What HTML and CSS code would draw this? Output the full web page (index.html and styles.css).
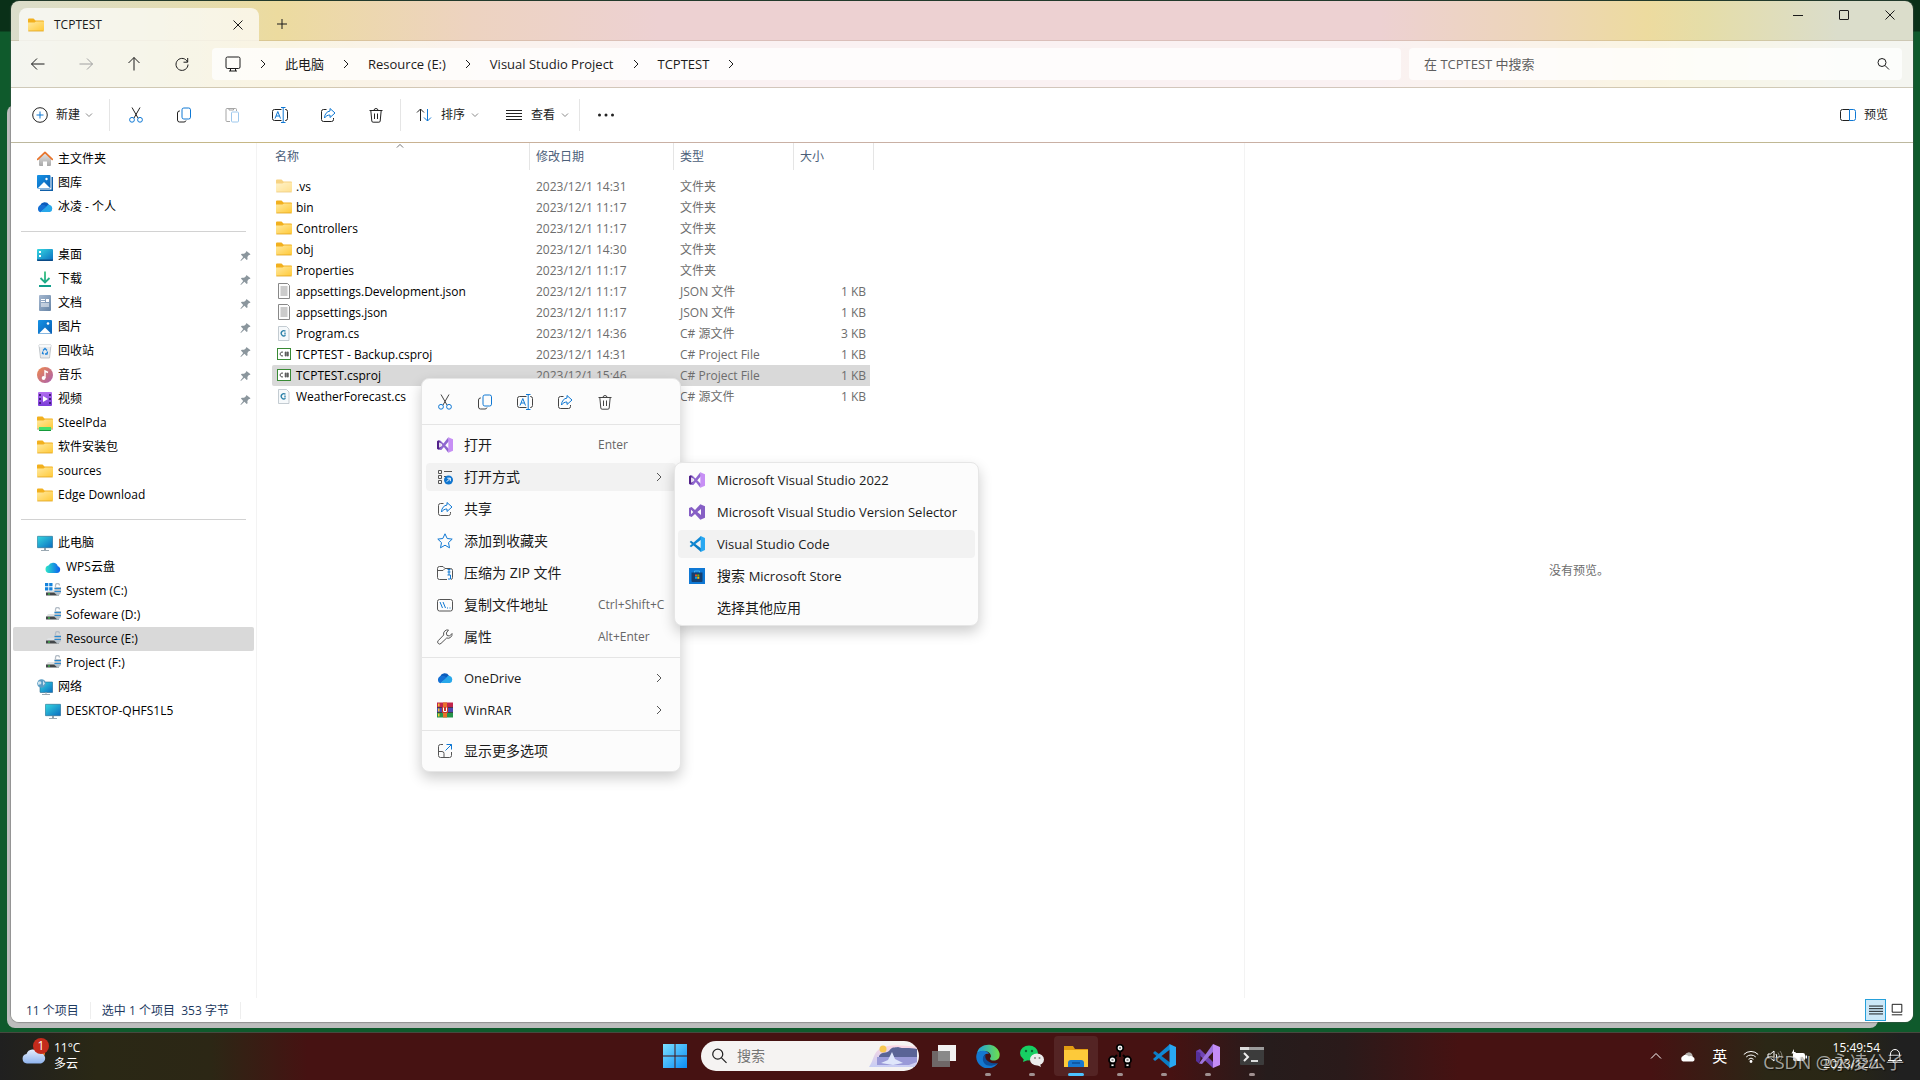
FILE: index.html
```html
<!DOCTYPE html>
<html lang="zh-CN">
<head>
    <meta charset="UTF-8">
    <meta name="viewport" content="width=device-width, initial-scale=1.0">
    <title>TCPTEST</title>
    <link rel="stylesheet" href="styles.css">
</head>
<body>
    <!-- Icon sprite -->
    <svg class="sprite" width="0" height="0" aria-hidden="true">
        <defs>
            <linearGradient id="gFolder" x1="0" y1="0" x2="1" y2="1"><stop offset="0" stop-color="#ffe9a0"/><stop offset="1" stop-color="#ffc937"/></linearGradient>
            <linearGradient id="gScreen" x1="0" y1="0" x2="1" y2="1"><stop offset="0" stop-color="#35d8e0"/><stop offset="1" stop-color="#0b6cc0"/></linearGradient>
            <linearGradient id="gPhoto" x1="0" y1="0" x2="1" y2="1"><stop offset="0" stop-color="#1593e6"/><stop offset="1" stop-color="#0a5fb4"/></linearGradient>
            <linearGradient id="gMusic" x1="0" y1="0" x2="1" y2="1"><stop offset="0" stop-color="#f08a4b"/><stop offset="1" stop-color="#a95fb0"/></linearGradient>
            <linearGradient id="gDown" gradientUnits="userSpaceOnUse" x1="0" y1="0" x2="0" y2="16"><stop offset="0" stop-color="#3cc47c"/><stop offset="1" stop-color="#0d9c8c"/></linearGradient>
            <linearGradient id="gVideo" x1="0" y1="0" x2="0" y2="1"><stop offset="0" stop-color="#b36ef0"/><stop offset="1" stop-color="#7a3bd8"/></linearGradient>
            <linearGradient id="gDoc" x1="0" y1="0" x2="1" y2="1"><stop offset="0" stop-color="#a5b8d0"/><stop offset="1" stop-color="#6684a6"/></linearGradient>
            <linearGradient id="gWps" x1="0" y1="0" x2="1" y2="0"><stop offset="0" stop-color="#2ee6c8"/><stop offset="1" stop-color="#0a5df0"/></linearGradient>
            <linearGradient id="gHome" x1="0" y1="0" x2="0" y2="1"><stop offset="0" stop-color="#e4e4e4"/><stop offset="1" stop-color="#a8a8a8"/></linearGradient>
            <linearGradient id="gWin" x1="0" y1="0" x2="1" y2="1"><stop offset="0" stop-color="#7be0ff"/><stop offset="1" stop-color="#0a8cf5"/></linearGradient>
            <linearGradient id="gEdge" x1="0" y1="0" x2="1" y2="0"><stop offset="0" stop-color="#1b9de2"/><stop offset="1" stop-color="#6fe04a"/></linearGradient>
            <linearGradient id="gCloud" x1="0" y1="0" x2="0" y2="1"><stop offset="0" stop-color="#e4eefc"/><stop offset="1" stop-color="#8fb4ee"/></linearGradient>
            <linearGradient id="gSky" x1="0" y1="0" x2="0" y2="1"><stop offset="0" stop-color="#fbd6e2"/><stop offset="1" stop-color="#c7cdf4"/></linearGradient>
        </defs>

        <symbol id="folder" viewBox="0 0 16 16"><path d="M0 2.500a1 1 0 0 1 1-1h4.500l2 2H15a1 1 0 0 1 1 1V6H0z" fill="#f2b01e"/><path d="M0 5.500h6.500l1.500-1h8V13a1 1 0 0 1-1 1H1a1 1 0 0 1-1-1z" fill="url(#gFolder)"/><path d="M.3 14h15.400" stroke="#e0a21c" stroke-width=".8"/></symbol>
        <symbol id="folder-green" viewBox="0 0 16 16"><use href="#folder"/><path d="M0 14h16" stroke="#b8bcc0" stroke-width="1"/><path d="M2 12h12v3H2z" fill="#45e06a"/><path d="M2 15h12v1H2z" fill="#159a3a"/></symbol>
        <symbol id="home" viewBox="0 0 16 16"><path d="M2 7.500 8 2l6 5.500V14a1 1 0 0 1-1 1h-3v-4.500H6V15H3a1 1 0 0 1-1-1z" fill="url(#gHome)"/><path d="M.7 8.300 8 1.300l7.300 7" fill="none" stroke="#e8742c" stroke-width="1.700" stroke-linecap="round" stroke-linejoin="round"/></symbol>
        <symbol id="gallery" viewBox="0 0 16 16"><path d="M3 2h13v14H3z" fill="#0f5fa8"/><path d="M0 0h14.500v14.500H0z" fill="#fff"/><rect width="13.500" height="13.500" rx="1" fill="url(#gPhoto)"/><path d="m1 13 6-6 6 6z" fill="#fff"/><circle cx="9.500" cy="4" r="1.200" fill="#fff"/></symbol>
        <symbol id="picture" viewBox="0 0 16 16"><rect x="1" y="1" width="14" height="14" rx="1" fill="url(#gPhoto)"/><path d="m2 14.500 6-6 6 6z" fill="#fff"/><circle cx="11" cy="4.500" r="1.300" fill="#fff"/></symbol>
        <symbol id="onedrive" viewBox="0 0 16 16"><path d="M3 6.500a5 5 0 0 1 9-.8l-3 4-6 1z" fill="#0a5cbc"/><path d="M4 6a3.800 3.800 0 0 0-.5 7.300L10 8.500A5 5 0 0 0 4 6z" fill="#1470d4"/><path d="M9 8a4 4 0 0 1 3.500-2.300A3.900 3.900 0 0 1 13 13H3.500z" fill="#28a8ea"/></symbol>
        <symbol id="desktop" viewBox="0 0 16 16"><rect y="2" width="16" height="12" rx="1" fill="url(#gScreen)"/><path d="M0 12.500h16V13a1 1 0 0 1-1 1H1a1 1 0 0 1-1-1z" fill="#0a4a86"/><path d="M2 4h2v2H2zm0 4h2v2H2zM11 13h1m1 0h1" fill="#fff"/></symbol>
        <symbol id="download" viewBox="0 0 16 16"><path d="M8 .5V11M3.500 7 8 11.500 12.500 7M2 15h12" fill="none" stroke="url(#gDown)" stroke-width="1.800"/></symbol>
        <symbol id="document" viewBox="0 0 16 16"><rect x="2" width="12" height="16" rx="1" fill="url(#gDoc)"/><path d="M4 4.500h4M4 6.500h4M4 9h8M4 11h8" stroke="#fff"/><path d="M9 4h3v3H9z" fill="#fff"/></symbol>
        <symbol id="recycle" viewBox="0 0 16 16"><path d="M2 2h12l-1.500 13h-9z" fill="#e7eaed" stroke="#b4babf" stroke-width=".8"/><path d="M2 2h12l-.5 2h-11z" fill="#f8f9fa"/><path d="M6 7.500 8 5.500l2 2M10.500 8.500 10 11H8m-1 0-1.500-.5.3-2" fill="none" stroke="#1d82d8" stroke-width="1.300"/></symbol>
        <symbol id="music" viewBox="0 0 16 16"><circle cx="8" cy="8" r="8" fill="url(#gMusic)"/><path d="M8 11V4l3 1.500" fill="none" stroke="#fff" stroke-width="1.400"/><circle cx="6.600" cy="11" r="1.900" fill="#fff"/></symbol>
        <symbol id="video" viewBox="0 0 16 16"><rect x="1" y="1" width="14" height="14" rx="1" fill="url(#gVideo)"/><path d="M6 5v6l5-3z" fill="#fff"/><path d="M2 3h2v2H2zm0 4h2v2H2zm0 4h2v2H2zm10-8h2v2h-2zm0 4h2v2h-2zm0 4h2v2h-2z" fill="#43207c"/></symbol>
        <symbol id="computer" viewBox="0 0 16 16"><rect x=".3" y="1.300" width="15.400" height="11.400" rx=".5" fill="url(#gScreen)" stroke="#28688c" stroke-width=".6"/><path d="M7 13h2v2H7z" fill="#8fa0ac"/><path d="M4 15.500h8" stroke="#9aa8b2"/></symbol>
        <symbol id="wps" viewBox="0 0 16 16"><path d="M4 14a3.800 3.800 0 0 1-.5-7.500 5 5 0 0 1 9.300.7A3.500 3.500 0 0 1 12 14z" fill="url(#gWps)"/></symbol>
        <symbol id="drive" viewBox="0 0 16 16"><path d="M3 7h9l3 3H1z" fill="#dfe1e3"/><path d="M1 9.500h13v3H1z" fill="#424649"/><path d="M3 11h2" stroke="#3fe04a"/><path d="M10.500 4V2.500a2 2 0 0 1 4 0" fill="none" stroke="#b3bcc6" stroke-width="1.300"/><path d="M9.500 4H16v6l-3 3-3.500-3z" fill="#b5c0ca"/><path d="M9.500 5.500H16M9.500 8.500H16" stroke="#2a8ad0"/></symbol>
        <symbol id="drive-win" viewBox="0 0 16 16"><use href="#drive"/><path d="M0 0h8v8H0z" fill="#fff"/><path d="M0 0h3.300v3.300H0zm4.200 0h3.300v3.300H4.200zM0 4.200h3.300v3.300H0zm4.200 0h3.300v3.300H4.200z" fill="#1583dc"/></symbol>
        <symbol id="network" viewBox="0 0 16 16"><rect x="3" y="3" width="12.700" height="10.500" rx=".5" fill="url(#gScreen)" stroke="#28688c" stroke-width=".6"/><path d="M5 15.500h8M9 13v2" stroke="#9aa8b2"/><circle cx="4.500" cy="4.500" r="4.300" fill="#5b9dc4"/><path d="M1 3c3-2 4 1 3 2s-2 0-3 1zM6 1.500l2 3-2 2z" fill="#cfe4ee"/></symbol>
        <symbol id="pin" viewBox="0 0 12 12"><path d="M7 1l4.500 3.500-1 1h-.8L8 7.500 8.300 10l-1 1L4.800 8.500 1 12l-.5-.5 3-4L1 5l1-1 2.500.2L6.500 2.500z" fill="#8b969d"/></symbol>
        <symbol id="file" viewBox="0 0 16 16"><path d="M2.500.5h9l2 2v13h-11z" fill="#fdfdfd" stroke="#888"/><path d="M4.500 4h7M4.500 6h7M4.500 8h7M4.500 10h7M4.500 12h7" stroke="#999"/></symbol>
        <symbol id="cs" viewBox="0 0 16 16"><path d="M2.500 1.500h8l2.500 2.500v11.500H2.500z" fill="#f6f9fb" stroke="#b6bfc6" stroke-width=".8"/><path d="M9.500 6.300a2.600 2.600 0 1 0 0 4M9 7.500v2" fill="none" stroke="#2b80a8" stroke-width="1.300"/></symbol>
        <symbol id="csproj" viewBox="0 0 16 16"><rect x="1.500" y="2.500" width="13" height="11" fill="#fff" stroke="#388a34"/><path d="M7 6.200a2 2 0 1 0 0 3.600M9.800 5.500v5M11.800 5.500v5M8.500 7h4.500M8.500 9h4.500" fill="none" stroke="#333" stroke-width=".9"/></symbol>

        <symbol id="back" viewBox="0 0 16 16"><path d="M14.500 8h-13M7 2.500 1.500 8 7 13.500" class="ln"/></symbol>
        <symbol id="forward" viewBox="0 0 16 16"><path d="M1.500 8h13M9 2.500 14.500 8 9 13.500" class="ln"/></symbol>
        <symbol id="up" viewBox="0 0 16 16"><path d="M8 14.500v-13M2.500 7 8 1.500 13.500 7" class="ln"/></symbol>
        <symbol id="refresh" viewBox="0 0 16 16"><path d="M13.500 6A6 6 0 1 0 14 8.500M13.700 2v4.200H9.500" class="ln"/></symbol>
        <symbol id="monitor" viewBox="0 0 16 16"><rect x="1" y="1" width="14" height="11.500" rx="1.500" class="ln"/><path d="M5.500 12.500V15m5-2.500V15M4 15h8" class="ln"/></symbol>
        <symbol id="chev-right" viewBox="0 0 16 16"><path d="m6 4 4 4-4 4" class="ln"/></symbol>
        <symbol id="chev-down" viewBox="0 0 16 16"><path d="m5 6.500 3 3 3-3" class="ln"/></symbol>
        <symbol id="chev-up" viewBox="0 0 16 16"><path d="m3 10.500 5-5 5 5" class="ln"/></symbol>
        <symbol id="close" viewBox="0 0 16 16"><path d="m3.500 3.500 9 9m0-9-9 9" class="ln"/></symbol>
        <symbol id="plus" viewBox="0 0 16 16"><path d="M8 3v10M3 8h10" class="ln"/></symbol>
        <symbol id="min" viewBox="0 0 16 16"><path d="M3 8.500h10" class="ln"/></symbol>
        <symbol id="max" viewBox="0 0 16 16"><rect x="3.500" y="3.500" width="9" height="9" rx=".5" class="ln"/></symbol>
        <symbol id="search" viewBox="0 0 16 16"><circle cx="7" cy="6.500" r="4" class="ln"/><path d="m10 9.500 4 4" class="ln"/></symbol>
        <symbol id="new" viewBox="0 0 16 16"><circle cx="8" cy="8" r="7.300" class="ln"/><path d="M8 4.500v7M4.500 8h7" class="ln blue"/></symbol>
        <symbol id="cut" viewBox="0 0 16 16"><path d="m4 .5 6 10.500M12 .5 6 11" class="ln"/><circle cx="4" cy="12.800" r="2.400" class="ln blue"/><circle cx="12" cy="12.800" r="2.400" class="ln blue"/></symbol>
        <symbol id="copy" viewBox="0 0 16 16"><path d="M4 4H3.500a2 2 0 0 0-2 2v7a2 2 0 0 0 2 2H8a2 2 0 0 0 2-1.500" class="ln"/><rect x="6" y="1" width="8.500" height="11" rx="1.800" class="ln blue"/></symbol>
        <symbol id="paste" viewBox="0 0 16 16"><path d="M6 14.500H3a1 1 0 0 1-1-1v-11a1 1 0 0 1 1-1h8.500a1 1 0 0 1 1 1V4M5 1.500V3h4.500V1.500z" class="ln"/><rect x="7.500" y="5" width="7" height="10" rx="1" class="ln blue"/></symbol>
        <symbol id="rename" viewBox="0 0 16 16"><path d="M9.500 2.500h-7a2 2 0 0 0-2 2v7a2 2 0 0 0 2 2h7m3.500-11h.5a2 2 0 0 1 2 2v7a2 2 0 0 1-2 2H13" class="ln"/><path d="M9 .5h4.500m-2.300 0v15M9 15.500h4.500M3 11.500 5.800 4.500l2.700 7M4 9h3.500" class="ln blue"/></symbol>
        <symbol id="share" viewBox="0 0 16 16"><path d="M6.500 2.500H3.500a2 2 0 0 0-2 2v8a2 2 0 0 0 2 2h8a2 2 0 0 0 2-2V11" class="ln"/><path d="M10 1.500 15 6l-5 4.500V8C7.500 8 6 9 4.500 11c0-4 2.500-6.500 5.500-7z" class="ln blue"/></symbol>
        <symbol id="trash" viewBox="0 0 16 16"><path d="M1.500 3.500h13M6 3.500a2 2 0 0 1 4 0M2.800 3.500l1 10.500a1.300 1.300 0 0 0 1.300 1.200h5.800a1.300 1.300 0 0 0 1.300-1.200l1-10.500M6.500 6.500v5.500M9.500 6.500v5.500" class="ln"/></symbol>
        <symbol id="sort" viewBox="0 0 16 16"><path d="M4.500 14V2M1 5.500 4.500 2 8 5.500" class="ln"/><path d="M11.500 2v12M8 10.500l3.500 3.500 3.500-3.500" class="ln blue"/></symbol>
        <symbol id="lines" viewBox="0 0 16 16"><path d="M0 3.500h16M0 6.500h16M0 9.500h16M0 12.500h16" class="ln"/></symbol>
        <symbol id="dots" viewBox="0 0 16 16"><circle cx="1.500" cy="8" r="1.500"/><circle cx="8" cy="8" r="1.500"/><circle cx="14.500" cy="8" r="1.500"/></symbol>
        <symbol id="panel" viewBox="0 0 16 16"><path d="M9.500 2.500H2.500a2 2 0 0 0-2 2v7a2 2 0 0 0 2 2h7" class="ln"/><path d="M9.500 2.500v11h4a2 2 0 0 0 2-2v-7a2 2 0 0 0-2-2z" class="ln blue"/></symbol>
        <symbol id="openwith" viewBox="0 0 16 16"><path d="M1.500 1.500h3v3h-3zM1.500 6.500h3v3h-3zM1.500 11.500h3v3h-3zM7 2.500h8M7 7.500h2" class="ln"/><circle cx="11.500" cy="11" r="4.500" fill="#0f75cf"/><path d="m9.800 12.700 3.300-3.300M10.300 9.200h3v3" fill="none" stroke="#fff"/></symbol>
        <symbol id="star" viewBox="0 0 16 16"><path d="m8 .8 2.200 4.700 5 .6-3.700 3.500 1 5.200L8 12.200l-4.500 2.600 1-5.200L.8 6.100l5-.6z" class="ln blue"/></symbol>
        <symbol id="zip" viewBox="0 0 16 16"><path d="M10 14.500H2.500a2 2 0 0 1-2-2v-9a2 2 0 0 1 2-2H6l2 2h5.500a2 2 0 0 1 2 2v7a2 2 0 0 1-1.500 2M.5 5.500H6l2-2" class="ln"/><path d="M10.500 4.500h3M12 4v3m-1.500 0h3m-1.500 0v3m-1.500 0h3v4h-2.500" class="ln blue"/></symbol>
        <symbol id="path" viewBox="0 0 16 16"><rect x=".5" y="2.500" width="15" height="11.500" rx="2" class="ln"/><path d="m3 5 2.500 6M6 5l2.500 6M10 11h1m1.500 0h1" class="ln blue"/></symbol>
        <symbol id="wrench" viewBox="0 0 16 16"><path d="M11.500 1a4 4 0 0 0-4.800 5L1.200 11.700a1.900 1.900 0 0 0 2.800 2.700L9.700 9A4 4 0 0 0 15 4.500L12.500 7 10 6.500 9.300 4z" class="ln"/></symbol>
        <symbol id="more" viewBox="0 0 16 16"><path d="M6 1.500H3.500a2 2 0 0 0-2 2v9a2 2 0 0 0 2 2h9a2 2 0 0 0 2-2V9M1.500 8.500H5a2 2 0 0 1 2 2v4" class="ln"/><path d="M9.500 1.500h5v5M14.500 1.500 8.500 7.500" class="ln blue"/></symbol>
        <symbol id="winrar" viewBox="0 0 16 16"><path d="M0 .5h16v5H0z" fill="#c2244a"/><path d="M0 5.500h16v5H0z" fill="#4e48b0"/><path d="M0 10.500h16v5H0z" fill="#26944a"/><path d="M0 5.500h16M0 10.500h16" stroke="#2a1d22" stroke-width=".7"/><path d="M1 1.500h1.500v3H1zm0 5h1.500v3H1zm0 5h1.500v3H1z" fill="#f7c531"/><path d="M6 .5h4v15H6z" fill="#e8702a"/><path d="M5 5h6v6H5z" fill="#c8392b"/><path d="M6.500 5.500v4h3v-4" fill="none" stroke="#fff"/></symbol>
        <symbol id="vs" viewBox="0 0 24 24"><path d="m0 6.500 2-1.700 4 1.700v11l-4 1.700-2-1.700z" fill="#52218a"/><path d="M2.500 5 17 23.500l1-5.500L5.500 5.500zM2.500 19l4 .5L18 6 17 .5z" fill="#8f66cf"/><path d="M6 9.500 3 7.800v8.400l3-1.700z" fill="#fff" opacity=".85"/><path d="M17 .5 24 3.500v17l-7 3z" fill="#c78ff5"/></symbol>
        <symbol id="vs-old" viewBox="0 0 24 24"><path fill-rule="evenodd" d="M17 .5 24 3.500v17l-7 3-8-8.500-5 4.500-4-1.500V6l4-1.500L9 9zM3 8.500v7L6.500 12zM18 7.500 12.500 12l5.500 4.500z" fill="#865fc5"/></symbol>
        <symbol id="vscode" viewBox="0 0 24 24"><path d="M1 9 3 7l15 11.500V24z" fill="#0a7cc4"/><path d="M1 15l2 2L18 5.500V0z" fill="#1088d4"/><path d="M17.500 0 24 3v18l-6.500 3z" fill="#29a8f2"/></symbol>
        <symbol id="vs-bold" viewBox="0 0 24 24"><path d="m0 7 4-2 13 13v6L0 8z" fill="#7145b4"/><path d="M0 7v10l3 2.500L4.500 15V9z" fill="#55309a"/><path d="M3 19.500 17 0v8L6 20z" fill="#9d74dc"/><path d="m17 0 7 3v18l-7 3z" fill="#c48cf6"/></symbol>
        <symbol id="store" viewBox="0 0 16 16"><path d="M0 0h16v16H0z" fill="#0f78d4"/><path d="M5.500 5V3h5v2" fill="none" stroke="#43b4f2"/><path d="M2.500 4.500h11V13a1 1 0 0 1-1 1h-9a1 1 0 0 1-1-1z" fill="#173f6e"/><path d="M6 6.500h2v2H6z" fill="#f25022"/><path d="M8.300 6.500h2v2h-2z" fill="#7fba00"/><path d="M6 8.800h2v2H6z" fill="#00a4ef"/><path d="M8.300 8.800h2v2h-2z" fill="#ffb900"/></symbol>

        <symbol id="weather" viewBox="0 0 24 20"><circle cx="18" cy="7" r="5" fill="#f08a24"/><path d="M5 17.500a4.800 4.800 0 0 1-.5-9.500A6.500 6.500 0 0 1 16.500 7a5.300 5.300 0 0 1 2.500 10.500z" fill="url(#gCloud)"/></symbol>
        <symbol id="windows" viewBox="0 0 24 24"><path d="M0 0h11.500v11.500H0zm12.500 0H24v11.500H12.500zM0 12.500h11.500V24H0zm12.500 0H24V24H12.500z" fill="url(#gWin)"/></symbol>
        <symbol id="scene" viewBox="0 0 48 26"><path d="M0 24C5 17 4 9 12 5c8-4 20-3 36-1v20z" fill="url(#gSky)"/><circle cx="14" cy="6" r="3.500" fill="#f8c850"/><path d="M10 13c3-5 7-2 10-5 3-5 6-3 9-4 4 2 12 0 19 2v8H10z" fill="#5a6496"/><path d="M8 14h40v5l-8 3H8z" fill="#9a9ad8"/><path d="m12 20 7-3 4-8 3 7 8 4-10 2z" fill="#dfe6fb"/></symbol>
        <symbol id="taskview" viewBox="0 0 24 24"><rect x="6" y="1" width="18" height="16" fill="#f2f2f2"/><rect y="7" width="18" height="16" fill="#777" opacity=".85"/></symbol>
        <symbol id="edge" viewBox="0 0 24 24"><path d="M1 9C3-1 20-3 23.500 9c1 6-3 8-7 7.500-3-.5-3-2-1.500-4C15 7 7 5 1 9z" fill="url(#gEdge)"/><path d="M1 9c5-4 11-2 12 1-5-1-6 3-5 6 2 5 8 7 14 3-4 6-12 7-17 3C1 19-1 14 1 9z" fill="#1478d0"/><path d="M10 10c-4 2-4 7-1 10 2 2 7 3 13-1-6 1-11-1-12.500-5-.5-2 0-3 .5-4z" fill="#0c4f9c"/></symbol>
        <symbol id="wechat" viewBox="0 0 24 24"><ellipse cx="9" cy="9" rx="9" ry="7.500" fill="#17cf63"/><path d="m3 18 1-4 4 2z" fill="#17cf63"/><ellipse cx="17" cy="15.500" rx="7" ry="6" fill="#ececec"/><path d="m21 23-1-3-3 1z" fill="#ececec"/><circle cx="6" cy="7" r="1.200" fill="#0b6b34"/><circle cx="12" cy="7" r="1.200" fill="#0b6b34"/><circle cx="15" cy="14" r="1" fill="#888"/><circle cx="19.500" cy="14" r="1" fill="#888"/></symbol>
        <symbol id="explorer" viewBox="0 0 24 24"><path d="M0 2h9l2 3h13v6H0z" fill="#e29c12"/><path d="M0 6h24v17H0z" fill="#fdca3a"/><path d="M4 23v-4a3 3 0 0 1 3-3h10a3 3 0 0 1 3 3v4z" fill="#1878d0"/><path d="M8 19h8" stroke="#0c4f98" stroke-width="1.500"/></symbol>
        <symbol id="nodes" viewBox="0 0 24 24"><path d="M12 8v5M5 15l4-4m10 4-4-4" stroke="#000" stroke-width="2"/><g fill="#f4f4f4" stroke="#000" stroke-width="1.800"><circle cx="12" cy="4" r="3.300"/><circle cx="4.500" cy="16" r="3.500"/><circle cx="19.500" cy="16" r="3.500"/><rect x="2.500" y="19.500" width="4" height="3.500"/><rect x="17.500" y="19.500" width="4" height="3.500"/></g><path d="M11 4h2M3.500 16h2m13 0h2" stroke="#222"/></symbol>
        <symbol id="terminal" viewBox="0 0 24 24"><rect y="3" width="24" height="18" rx="1" fill="#3c3c3c"/><path d="M0 3h24v3H0z" fill="#9b9b9b"/><path d="M0 3h9v3H0z" fill="#dcdcdc"/><path d="m4 9 4 4-4 4" fill="none" stroke="#eee" stroke-width="2"/><path d="M11 17h7" stroke="#eee" stroke-width="1.800"/></symbol>
        <symbol id="cloud" viewBox="0 0 16 16"><path d="M5 7a4 4 0 0 1 7-1l1 3-8 1z" fill="#b4b0ac"/><path d="M3 13.500A3 3 0 0 1 3 8a4 4 0 0 1 6 .5c2-1 3 0 4 .5a2.400 2.400 0 0 1 0 4.500z" fill="#fff"/></symbol>
        <symbol id="wifi" viewBox="0 0 16 16"><path d="M.8 6.500a10 10 0 0 1 14.400 0M3.200 9a6.800 6.800 0 0 1 9.600 0M5.500 11.300a3.600 3.600 0 0 1 5 0" class="ln"/><circle cx="8" cy="13.500" r="1.400"/></symbol>
        <symbol id="speaker" viewBox="0 0 16 16"><path d="M1 6v4h2.500L7 13V3L3.500 6zM9 6q1.500 2 0 4" class="ln"/><path d="M11 4.500q3 3.500 0 7M13 3q4 5 0 10" class="ln" opacity=".4"/></symbol>
        <symbol id="battery" viewBox="0 0 16 16"><rect x="2" y="5" width="12" height="8" rx="2"/><path d="M14.500 7.500H16v3h-1.500zM3 1 .5 5.500h2L1.500 9 5 4H3z"/></symbol>
        <symbol id="bell" viewBox="0 0 16 16"><path d="M1 12.500h14M3 12l.5-6a4.500 4.500 0 0 1 9 0l.5 6M6 13a2 2 0 0 0 4 0" class="ln"/></symbol>
        <symbol id="bigicons" viewBox="0 0 16 16"><path d="M2.500 1.500h11v9h-11zM2 13.500h12" class="ln"/></symbol>
    </svg>

    <div class="desktop">
        <div class="window-behind"></div>

        <div class="window">
            <header class="titlebar">
                <div class="tab">
                    <svg class="icon"><use href="#folder"/></svg>
                    <span class="tab-title">TCPTEST</span>
                    <button class="icon-btn" aria-label="关闭标签页"><svg class="icon"><use href="#close"/></svg></button>
                </div>
                <button class="tab-add" aria-label="新标签页"><svg class="icon"><use href="#plus"/></svg></button>
                <div class="window-buttons">
                    <button aria-label="最小化"><svg class="icon"><use href="#min"/></svg></button>
                    <button aria-label="最大化"><svg class="icon"><use href="#max"/></svg></button>
                    <button aria-label="关闭"><svg class="icon"><use href="#close"/></svg></button>
                </div>
            </header>

            <div class="navbar">
                <div class="nav-buttons">
                    <button aria-label="后退"><svg class="icon"><use href="#back"/></svg></button>
                    <button aria-label="前进" disabled><svg class="icon"><use href="#forward"/></svg></button>
                    <button aria-label="向上"><svg class="icon"><use href="#up"/></svg></button>
                    <button aria-label="刷新"><svg class="icon"><use href="#refresh"/></svg></button>
                </div>
                <nav class="address">
                    <svg class="icon monitor"><use href="#monitor"/></svg>
                    <svg class="icon chev"><use href="#chev-right"/></svg>
                    <a href="#">此电脑</a>
                    <svg class="icon chev"><use href="#chev-right"/></svg>
                    <a href="#">Resource (E:)</a>
                    <svg class="icon chev"><use href="#chev-right"/></svg>
                    <a href="#">Visual Studio Project</a>
                    <svg class="icon chev"><use href="#chev-right"/></svg>
                    <a href="#">TCPTEST</a>
                    <svg class="icon chev"><use href="#chev-right"/></svg>
                </nav>
                <label class="search-box">
                    <input type="text" placeholder="在 TCPTEST 中搜索" aria-label="搜索">
                    <svg class="icon"><use href="#search"/></svg>
                </label>
            </div>

            <div class="toolbar">
                <button class="tool tool-new"><svg class="icon"><use href="#new"/></svg>新建<svg class="icon small"><use href="#chev-down"/></svg></button>
                <span class="sep"></span>
                <button class="tool square" aria-label="剪切"><svg class="icon"><use href="#cut"/></svg></button>
                <button class="tool square" aria-label="复制"><svg class="icon"><use href="#copy"/></svg></button>
                <button class="tool square" aria-label="粘贴" disabled><svg class="icon"><use href="#paste"/></svg></button>
                <button class="tool square" aria-label="重命名"><svg class="icon"><use href="#rename"/></svg></button>
                <button class="tool square" aria-label="共享"><svg class="icon"><use href="#share"/></svg></button>
                <button class="tool square" aria-label="删除"><svg class="icon"><use href="#trash"/></svg></button>
                <span class="sep"></span>
                <button class="tool tool-menu"><svg class="icon"><use href="#sort"/></svg>排序<svg class="icon small"><use href="#chev-down"/></svg></button>
                <button class="tool tool-menu"><svg class="icon"><use href="#lines"/></svg>查看<svg class="icon small"><use href="#chev-down"/></svg></button>
                <span class="sep"></span>
                <button class="tool square" aria-label="更多"><svg class="icon"><use href="#dots"/></svg></button>
                <button class="tool tool-preview"><svg class="icon"><use href="#panel"/></svg>预览</button>
            </div>

            <main class="content">
                <aside class="sidebar">
                    <ul>
                        <li><svg class="icon"><use href="#home"/></svg>主文件夹</li>
                        <li><svg class="icon"><use href="#gallery"/></svg>图库</li>
                        <li><svg class="icon"><use href="#onedrive"/></svg>冰凌 - 个人</li>
                    </ul>
                    <hr>
                    <ul>
                        <li><svg class="icon"><use href="#desktop"/></svg>桌面<svg class="pin"><use href="#pin"/></svg></li>
                        <li><svg class="icon"><use href="#download"/></svg>下载<svg class="pin"><use href="#pin"/></svg></li>
                        <li><svg class="icon"><use href="#document"/></svg>文档<svg class="pin"><use href="#pin"/></svg></li>
                        <li><svg class="icon"><use href="#picture"/></svg>图片<svg class="pin"><use href="#pin"/></svg></li>
                        <li><svg class="icon"><use href="#recycle"/></svg>回收站<svg class="pin"><use href="#pin"/></svg></li>
                        <li><svg class="icon"><use href="#music"/></svg>音乐<svg class="pin"><use href="#pin"/></svg></li>
                        <li><svg class="icon"><use href="#video"/></svg>视频<svg class="pin"><use href="#pin"/></svg></li>
                        <li><svg class="icon"><use href="#folder-green"/></svg>SteelPda</li>
                        <li><svg class="icon"><use href="#folder"/></svg>软件安装包</li>
                        <li><svg class="icon"><use href="#folder"/></svg>sources</li>
                        <li><svg class="icon"><use href="#folder"/></svg>Edge Download</li>
                    </ul>
                    <hr>
                    <ul>
                        <li><svg class="icon"><use href="#computer"/></svg>此电脑</li>
                        <li class="child"><svg class="icon"><use href="#wps"/></svg>WPS云盘</li>
                        <li class="child"><svg class="icon"><use href="#drive-win"/></svg>System (C:)</li>
                        <li class="child"><svg class="icon"><use href="#drive"/></svg>Sofeware (D:)</li>
                        <li class="child selected"><svg class="icon"><use href="#drive"/></svg>Resource (E:)</li>
                        <li class="child"><svg class="icon"><use href="#drive"/></svg>Project (F:)</li>
                        <li><svg class="icon"><use href="#network"/></svg>网络</li>
                        <li class="child"><svg class="icon"><use href="#computer"/></svg>DESKTOP-QHFS1L5</li>
                    </ul>
                </aside>

                <section class="files">
                    <table>
                        <thead>
                            <tr>
                                <th class="col-name">名称<svg class="sort-mark"><use href="#chev-up"/></svg></th>
                                <th class="col-date">修改日期</th>
                                <th class="col-type">类型</th>
                                <th class="col-size">大小</th>
                            </tr>
                        </thead>
                        <tbody>
                            <tr><td><svg class="icon faded"><use href="#folder"/></svg>.vs</td><td>2023/12/1 14:31</td><td>文件夹</td><td></td></tr>
                            <tr><td><svg class="icon"><use href="#folder"/></svg>bin</td><td>2023/12/1 11:17</td><td>文件夹</td><td></td></tr>
                            <tr><td><svg class="icon"><use href="#folder"/></svg>Controllers</td><td>2023/12/1 11:17</td><td>文件夹</td><td></td></tr>
                            <tr><td><svg class="icon"><use href="#folder"/></svg>obj</td><td>2023/12/1 14:30</td><td>文件夹</td><td></td></tr>
                            <tr><td><svg class="icon"><use href="#folder"/></svg>Properties</td><td>2023/12/1 11:17</td><td>文件夹</td><td></td></tr>
                            <tr><td><svg class="icon"><use href="#file"/></svg>appsettings.Development.json</td><td>2023/12/1 11:17</td><td>JSON 文件</td><td>1 KB</td></tr>
                            <tr><td><svg class="icon"><use href="#file"/></svg>appsettings.json</td><td>2023/12/1 11:17</td><td>JSON 文件</td><td>1 KB</td></tr>
                            <tr><td><svg class="icon"><use href="#cs"/></svg>Program.cs</td><td>2023/12/1 14:36</td><td>C# 源文件</td><td>3 KB</td></tr>
                            <tr><td><svg class="icon"><use href="#csproj"/></svg>TCPTEST - Backup.csproj</td><td>2023/12/1 14:31</td><td>C# Project File</td><td>1 KB</td></tr>
                            <tr class="selected"><td><svg class="icon"><use href="#csproj"/></svg>TCPTEST.csproj</td><td>2023/12/1 15:46</td><td>C# Project File</td><td>1 KB</td></tr>
                            <tr><td><svg class="icon"><use href="#cs"/></svg>WeatherForecast.cs</td><td></td><td>C# 源文件</td><td>1 KB</td></tr>
                        </tbody>
                    </table>
                </section>

                <section class="preview">没有预览。</section>
            </main>

            <footer class="statusbar">
                <span>11 个项目</span>
                <span>选中 1 个项目&nbsp; 353 字节</span>
                <div class="view-buttons">
                    <button class="active" aria-label="详细信息"><svg class="icon"><use href="#lines"/></svg></button>
                    <button aria-label="大图标"><svg class="icon"><use href="#bigicons"/></svg></button>
                </div>
            </footer>
        </div>

        <!-- Right-click menu -->
        <div class="menu context-menu">
            <div class="menu-actions">
                <button aria-label="剪切"><svg class="icon"><use href="#cut"/></svg></button>
                <button aria-label="复制"><svg class="icon"><use href="#copy"/></svg></button>
                <button aria-label="重命名"><svg class="icon"><use href="#rename"/></svg></button>
                <button aria-label="共享"><svg class="icon"><use href="#share"/></svg></button>
                <button aria-label="删除"><svg class="icon"><use href="#trash"/></svg></button>
            </div>
            <div class="menu-group">
                <button class="menu-item"><svg class="icon"><use href="#vs"/></svg><span>打开</span><kbd>Enter</kbd></button>
                <button class="menu-item active"><svg class="icon"><use href="#openwith"/></svg><span>打开方式</span><svg class="icon arrow"><use href="#chev-right"/></svg></button>
                <button class="menu-item"><svg class="icon"><use href="#share"/></svg><span>共享</span></button>
                <button class="menu-item"><svg class="icon"><use href="#star"/></svg><span>添加到收藏夹</span></button>
                <button class="menu-item"><svg class="icon"><use href="#zip"/></svg><span>压缩为 ZIP 文件</span></button>
                <button class="menu-item"><svg class="icon"><use href="#path"/></svg><span>复制文件地址</span><kbd>Ctrl+Shift+C</kbd></button>
                <button class="menu-item"><svg class="icon"><use href="#wrench"/></svg><span>属性</span><kbd>Alt+Enter</kbd></button>
            </div>
            <div class="menu-group">
                <button class="menu-item"><svg class="icon"><use href="#onedrive"/></svg><span lang="en">OneDrive</span><svg class="icon arrow"><use href="#chev-right"/></svg></button>
                <button class="menu-item"><svg class="icon"><use href="#winrar"/></svg><span lang="en">WinRAR</span><svg class="icon arrow"><use href="#chev-right"/></svg></button>
            </div>
            <div class="menu-group">
                <button class="menu-item"><svg class="icon"><use href="#more"/></svg><span>显示更多选项</span></button>
            </div>
        </div>

        <div class="menu sub-menu">
            <button class="menu-item"><svg class="icon"><use href="#vs"/></svg><span lang="en">Microsoft Visual Studio 2022</span></button>
            <button class="menu-item"><svg class="icon"><use href="#vs-old"/></svg><span lang="en">Microsoft Visual Studio Version Selector</span></button>
            <button class="menu-item active"><svg class="icon"><use href="#vscode"/></svg><span lang="en">Visual Studio Code</span></button>
            <button class="menu-item"><svg class="icon"><use href="#store"/></svg><span>搜索 <span lang="en">Microsoft Store</span></span></button>
            <button class="menu-item"><svg class="icon"></svg><span>选择其他应用</span></button>
        </div>
    </div>

    <div class="taskbar">
        <div class="weather">
            <svg class="weather-icon"><use href="#weather"/></svg>
            <span class="badge">1</span>
            <div class="weather-text"><span>11°C</span><span>多云</span></div>
        </div>
        <div class="apps">
            <button class="app" aria-label="开始"><svg><use href="#windows"/></svg></button>
            <label class="task-search">
                <svg class="glass"><use href="#search"/></svg>
                <input type="text" placeholder="搜索" aria-label="搜索">
                <svg class="scene"><use href="#scene"/></svg>
            </label>
            <button class="app" aria-label="任务视图"><svg><use href="#taskview"/></svg></button>
            <button class="app running" aria-label="Edge"><svg><use href="#edge"/></svg></button>
            <button class="app running" aria-label="微信"><svg><use href="#wechat"/></svg></button>
            <button class="app running current" aria-label="文件资源管理器"><svg><use href="#explorer"/></svg></button>
            <button class="app running" aria-label="网络工具"><svg><use href="#nodes"/></svg></button>
            <button class="app running" aria-label="Visual Studio Code"><svg><use href="#vscode"/></svg></button>
            <button class="app running" aria-label="Visual Studio"><svg><use href="#vs-bold"/></svg></button>
            <button class="app running" aria-label="终端"><svg><use href="#terminal"/></svg></button>
        </div>
        <div class="tray">
            <svg class="icon"><use href="#chev-up"/></svg>
            <svg class="icon"><use href="#cloud"/></svg>
            <span class="ime">英</span>
            <div class="tray-status">
                <svg class="icon"><use href="#wifi"/></svg>
                <svg class="icon"><use href="#speaker"/></svg>
                <svg class="icon"><use href="#battery"/></svg>
            </div>
            <div class="clock"><span>15:49:54</span><span>2023/12/1</span></div>
            <svg class="icon"><use href="#bell"/></svg>
        </div>
        <div class="watermark">CSDN @永凌公子</div>
    </div>
</body>
</html>
```

FILE: styles.css
```css
:root {
    --blue: #0f78d4;
    --text: #1b1b1b;
    --muted: #6d6d6d;
    --line: #e5e5e5;
    --selected: #d9d9d9;
    --mica: linear-gradient(90deg, #dbddcb 0, #e2dcb4 8%, #ecdb9f 14%, #edd3c0 24%, #edd1d2 34%, #edd1d2 72%, #edd5b9 80%, #eddb9f 86%, #e5dda8 89%, #dbddcb 96%);
}

* {
    margin: 0;
    padding: 0;
    box-sizing: border-box;
}

body {
    height: 100vh;
    display: flex;
    flex-direction: column;
    overflow: hidden;
    font-family: "Open Sans", "Noto Sans CJK SC", sans-serif;
    font-size: 12px;
    line-height: 16px;
    color: var(--text);
}

button {
    border: none;
    background: none;
    font: inherit;
    color: inherit;
    display: flex;
    align-items: center;
    justify-content: center;
}

input {
    flex: 1;
    min-width: 0;
    border: none;
    outline: none;
    background: none;
    font: inherit;
}

a {
    color: inherit;
    text-decoration: none;
}

ul {
    list-style: none;
}

.sprite {
    position: absolute;
}

.icon {
    width: 16px;
    height: 16px;
    flex: none;
    fill: currentColor;
}

.ln {
    fill: none;
    stroke: currentColor;
    stroke-width: 1;
}

.ln.blue {
    stroke: var(--blue);
}

/* Desktop and window */
.desktop {
    position: relative;
    flex: 1;
    min-height: 0;
    padding: 1px 7px 10px 11px;
    background: linear-gradient(#0a3018 0, #0a3018 31px, #0f5a2c 32px, #0f5a2c 100%);
}

.window-behind {
    position: absolute;
    left: 7px;
    right: 42px;
    top: 105px;
    bottom: 4px;
    border-radius: 8px;
    background: #bdbdbd;
}

.window {
    position: relative;
    height: 100%;
    display: flex;
    flex-direction: column;
    border-radius: 8px;
    overflow: hidden;
    background: var(--mica);
    box-shadow: 0 0 1px 1px rgba(80, 80, 80, 0.4);
}

.titlebar {
    display: flex;
    height: 40px;
    padding-left: 8px;
    border-bottom: 1px solid rgba(150, 120, 90, 0.2);
}

.tab {
    align-self: flex-end;
    display: flex;
    align-items: center;
    width: 240px;
    height: 33px;
    margin-bottom: -1px;
    padding: 0 13px 0 9px;
    gap: 10px;
    border-radius: 8px 8px 0 0;
    background: rgba(255, 255, 255, 0.7);
}

.tab-title {
    flex: 1;
}

.tab-add {
    width: 46px;
    padding-top: 6px;
}

.window-buttons {
    display: flex;
    height: 28px;
    margin-left: auto;
}

.window-buttons button {
    width: 46px;
}

.navbar {
    display: flex;
    align-items: center;
    height: 47px;
    padding-right: 11px;
    border-bottom: 1px solid rgba(120, 100, 60, 0.3);
    background: rgba(255, 255, 255, 0.7);
    font-size: 13px;
}

.nav-buttons {
    display: flex;
    padding-left: 3px;
}

.nav-buttons button {
    width: 48px;
    height: 32px;
}

.nav-buttons button:disabled {
    color: #a0a0a0;
}

.address {
    flex: 1;
    display: flex;
    align-items: center;
    height: 32px;
    margin: 0 8px 0 6px;
    padding-left: 13px;
    border-radius: 4px;
    background: rgba(255, 255, 255, 0.75);
}

.address .chev {
    margin: 0 14px;
}

.search-box {
    display: flex;
    align-items: center;
    width: 493px;
    height: 32px;
    padding: 0 11px 0 15px;
    border-radius: 4px;
    background: rgba(255, 255, 255, 0.75);
}

.search-box input::placeholder {
    color: #5f5f5f;
}

.toolbar {
    display: flex;
    align-items: center;
    height: 55px;
    padding: 0 25px 0 11px;
    background: linear-gradient(#fff, #fff) padding-box, var(--mica) border-box;
    border-bottom: 1px solid rgba(120, 100, 60, 0.3);
}

.tool {
    height: 32px;
    color: #222;
}

.tool-new {
    width: 87px;
    padding-left: 10px;
    gap: 8px;
    justify-content: flex-start;
}

.tool.square {
    width: 48px;
}

.tool-menu {
    width: 90px;
    padding-left: 13px;
    gap: 9px;
    justify-content: flex-start;
}

.tool-menu + .tool-menu {
    width: 86px;
}

.tool .small {
    margin-left: -7px;
    color: #8a8a8a;
}

.tool:disabled {
    opacity: 0.4;
}

.tool-preview {
    margin-left: auto;
    gap: 8px;
}

.sep {
    width: 1px;
    height: 32px;
    margin-right: 2px;
    background: var(--line);
}

.content {
    flex: 1;
    min-height: 0;
    display: flex;
    background: #fff;
}

/* Sidebar */
.sidebar {
    width: 246px;
    padding: 4px 2px;
    border-right: 1px solid #f3f3f3;
    color: #000;
}

.sidebar li {
    display: flex;
    align-items: center;
    gap: 5px;
    height: 24px;
    padding-left: 24px;
    border-radius: 2px;
}

.sidebar .child {
    padding-left: 32px;
}

.sidebar .selected {
    background: var(--selected);
}

.sidebar hr {
    height: 1px;
    margin: 12px 8px 11px;
    border: none;
    background: #d2d2d2;
}

.pin {
    width: 11px;
    height: 11px;
    margin: 0 3px 0 auto;
}

/* File list */
.files {
    width: 988px;
    border-right: 1px solid #f3f3f3;
}

table {
    width: 602px;
    margin-left: 15px;
    table-layout: fixed;
    border-collapse: separate;
    border-spacing: 0;
}

th {
    position: relative;
    height: 27px;
    padding: 0 6px;
    border-right: 1px solid var(--line);
    text-align: left;
    font-weight: 400;
    color: #4c607a;
}

.col-name {
    width: 258px;
    padding-left: 3px;
}

.col-date {
    width: 144px;
}

.col-type {
    width: 120px;
}

.sort-mark {
    position: absolute;
    top: -2px;
    left: 50%;
    width: 10px;
    height: 10px;
    margin-left: -6px;
    color: #222;
}

tbody::before {
    content: "";
    display: block;
    height: 6px;
}

td {
    height: 21px;
    padding: 0 6px;
    white-space: nowrap;
    color: var(--muted);
}

td:first-child {
    padding-left: 4px;
    color: #000;
    border-radius: 2px 0 0 2px;
}

td:last-child {
    border-right: 4px solid transparent;
    padding-right: 4px;
    background-clip: padding-box;
    text-align: right;
}

td .icon {
    margin-right: 4px;
    vertical-align: -3px;
}

td .faded {
    opacity: 0.55;
}

tr.selected td {
    background-color: var(--selected);
}

.preview {
    flex: 1;
    display: flex;
    align-items: center;
    justify-content: center;
    color: var(--muted);
}

.statusbar {
    display: flex;
    align-items: center;
    height: 24px;
    padding: 0 6px 0 4px;
    background: #fff;
    color: #1e3a5f;
}

.statusbar span {
    padding: 1px 11px 0;
    border-right: 1px solid #eee;
}

.view-buttons {
    display: flex;
    margin-left: auto;
    color: #000;
}

.view-buttons button {
    width: 21px;
    height: 22px;
}

.view-buttons .active {
    border: 1px solid #26a0da;
    background: #cce8f8;
}

.view-buttons .icon {
    width: 14px;
    height: 14px;
}

/* Context menus */
.menu {
    position: absolute;
    border: 1px solid #e6e6e6;
    border-radius: 8px;
    background: #fcfcfc;
    box-shadow: 0 6px 14px rgba(0, 0, 0, 0.2);
    font-size: 14px;
}

.menu [lang="en"] {
    font-size: 13px;
}

.context-menu {
    left: 421px;
    top: 378px;
    width: 260px;
}

.menu-actions {
    display: flex;
    height: 45px;
    padding-left: 3px;
}

.menu-actions button {
    width: 40px;
    color: #444;
}

.menu-group,
.sub-menu {
    display: flex;
    flex-direction: column;
    gap: 4px;
}

.menu-group {
    padding: 6px 4px;
    border-top: 1px solid var(--line);
}

.sub-menu {
    left: 674px;
    top: 462px;
    width: 305px;
    padding: 3px;
}

.menu-item {
    height: 28px;
    padding-left: 11px;
    gap: 11px;
    justify-content: flex-start;
    border-radius: 4px;
}

.menu-item.active {
    background: #f2f2f2;
}

.menu-item .icon {
    color: #555;
}

.menu-item > span {
    flex: 1;
    text-align: left;
    white-space: nowrap;
}

.sub-menu .menu-item {
    gap: 12px;
}

.menu-item kbd {
    width: 78px;
    font-family: inherit;
    font-size: 12px;
    text-align: left;
    color: #666;
}

.menu-item .arrow {
    margin-right: 9px;
}

/* Taskbar */
.taskbar {
    position: relative;
    display: flex;
    align-items: center;
    height: 48px;
    padding-bottom: 2px;
    border-top: 1px solid #47493f;
    background: linear-gradient(90deg, #202020 0, #2a2815 5%, #2c2715 11%, #461212 16%, #461212 61%, #261c1c 66%, #2a1a1a 70%, #461212 76%, #461212 86%, #2b2716 92%, #292715 96%, #202020 99%);
    color: #fff;
}

.weather {
    position: relative;
    flex: 1;
    display: flex;
    align-items: center;
    gap: 8px;
    padding-left: 22px;
}

.weather-icon {
    width: 24px;
    height: 20px;
}

.badge {
    position: absolute;
    left: 33px;
    top: -2px;
    width: 16px;
    height: 16px;
    border-radius: 50%;
    background: #c42b1c;
    text-align: center;
}

.weather-text {
    display: flex;
    flex-direction: column;
}

.apps {
    display: flex;
    align-items: center;
    padding-left: 2px;
}

.app {
    position: relative;
    width: 44px;
    height: 40px;
}

.app svg {
    width: 24px;
    height: 24px;
}

.app.current {
    border-radius: 4px;
    background: rgba(255, 255, 255, 0.08);
}

.app.running::after {
    content: "";
    position: absolute;
    bottom: 0;
    width: 6px;
    height: 3px;
    border-radius: 2px;
    background: #a09090;
}

.app.current::after {
    width: 16px;
    background: #4cc2ff;
}

.task-search {
    display: flex;
    align-items: center;
    width: 218px;
    height: 30px;
    margin: 0 3px 0 4px;
    padding: 0 2px 0 8px;
    gap: 8px;
    border-radius: 15px;
    background: #f5f3f2;
    color: #222;
    overflow: hidden;
}

.task-search input {
    font-size: 14px;
}

.task-search .glass {
    width: 20px;
    height: 20px;
}

.task-search .scene {
    width: 48px;
    height: 26px;
}

.tray {
    flex: 1;
    display: flex;
    align-items: center;
    justify-content: flex-end;
    gap: 16px;
    padding-right: 17px;
}

.tray .ln {
    stroke-width: 1.3;
}

.ime {
    font-size: 15px;
}

.tray-status {
    display: flex;
    gap: 8px;
}

.clock {
    display: flex;
    flex-direction: column;
    text-align: right;
    margin: 0 -9px 0 0;
}

.watermark {
    position: absolute;
    right: 16px;
    bottom: 6px;
    font-size: 18px;
    line-height: 24px;
    color: rgba(255, 255, 255, 0.6);
    text-shadow: 1px 1px 1px rgba(0, 0, 0, 0.6);
}
```
